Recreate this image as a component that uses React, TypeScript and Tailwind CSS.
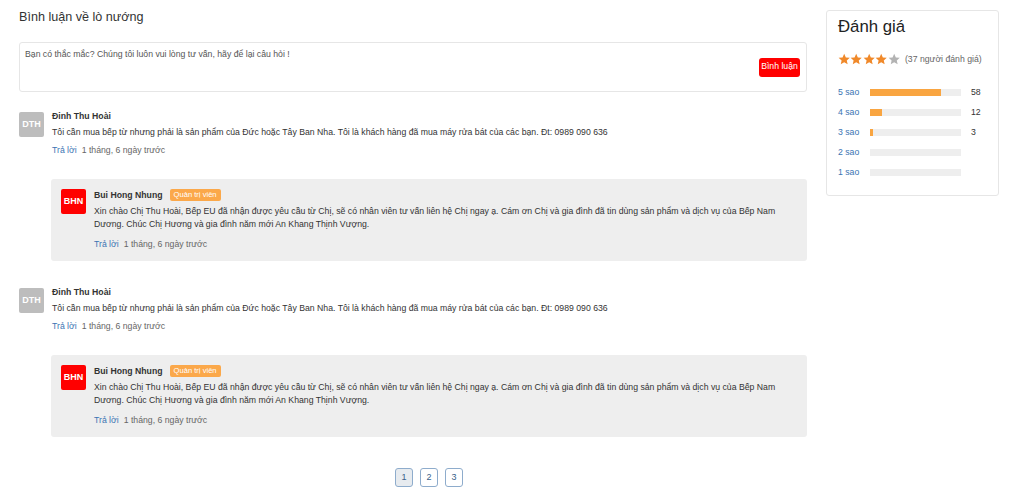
import React from 'react'

const font = { fontFamily: '"Liberation Sans", Arial, sans-serif' }

// ── Data ──────────────────────────────────────────────────────────────────────
const comments = [1, 2].map((id) => ({
  id,
  initials: 'DTH',
  name: 'Đinh Thu Hoài',
  text: 'Tôi cần mua bếp từ nhưng phải là sản phẩm của Đức hoặc Tây Ban Nha. Tôi là khách hàng đã mua máy rửa bát của các bạn. Đt: 0989 090 636',
  time: '1 tháng, 6 ngày trước',
  reply: {
    initials: 'BHN',
    name: 'Bui Hong Nhung',
    text: 'Xin chào Chị Thu Hoài, Bếp EU đã nhận được yêu cầu từ Chị, sẽ có nhân viên tư vấn liên hệ Chị ngay ạ. Cám ơn Chị và gia đình đã tin dùng sản phẩm và dịch vụ của Bếp Nam Dương. Chúc Chị Hương và gia đình năm mới An Khang Thịnh Vượng.',
    time: '1 tháng, 6 ngày trước',
  },
}))

const ratings = [
  { label: '5 sao', pct: 78, count: '58' },
  { label: '4 sao', pct: 13, count: '12' },
  { label: '3 sao', pct: 3, count: '3' },
  { label: '2 sao', pct: 0, count: '' },
  { label: '1 sao', pct: 0, count: '' },
]

function Star({ filled }: { filled: boolean }) {
  return (
    <svg viewBox="0 0 24 24" className="h-[12.4px] w-[12.4px]" fill={filled ? '#f0892a' : '#b3b3b3'}>
      <path d="M12 1.5l3.2 7.1 7.6.7-5.8 5.1 1.7 7.6L12 18.1 5.3 22l1.7-7.6L1.2 9.3l7.6-.7z" />
    </svg>
  )
}

function Meta({ time }: { time: string }) {
  return (
    <div className="flex h-[12px] items-center gap-[5px] text-[8.7px] leading-[12px]">
      <span className="text-[#3a74b3]">Trả lời</span>
      <span className="text-[#666]">{time}</span>
    </div>
  )
}

// ── Comment block ─────────────────────────────────────────────────────────────
function Comment({ c, first }: { c: (typeof comments)[number]; first: boolean }) {
  return (
    <div className={first ? 'mt-[18px]' : 'mt-[25px]'}>
      <div className="flex gap-[8px]">
        <div className="mt-[2px] flex h-[25px] w-[25px] shrink-0 items-center justify-center rounded-[2px] bg-[#bdbdbd] text-[9px] font-bold text-white">
          {c.initials}
        </div>
        <div className="flex-1">
          <div className="h-[12px] text-[8.7px] font-bold leading-[12px] text-[#333]">{c.name}</div>
          <div className="mt-[4px] text-[8.7px] leading-[12px] text-[#333]">{c.text}</div>
          <div className="mt-[6px]">
            <Meta time={c.time} />
          </div>
        </div>
      </div>

      {/* Admin reply */}
      <div className="ml-[32px] mt-[23px] flex gap-[8px] rounded-[3px] bg-[#eeeeee] pb-[11px] pl-[10px] pr-[16px] pt-[10px]">
        <div className="flex h-[25px] w-[25px] shrink-0 items-center justify-center rounded-[2px] bg-[#ff0000] text-[9px] font-bold text-white">
          {c.reply.initials}
        </div>
        <div className="flex-1">
          <div className="flex h-[12px] items-center gap-[7px]">
            <span className="text-[8.7px] font-bold leading-[12px] text-[#333]">{c.reply.name}</span>
            <span className="rounded-[2px] bg-[#fba84a] px-[4px] text-[7.6px] leading-[12px] text-white">
              Quản trị viên
            </span>
          </div>
          <div className="mt-[4px] text-[8.7px] leading-[13px] text-[#333]">{c.reply.text}</div>
          <div className="mt-[7px]">
            <Meta time={c.reply.time} />
          </div>
        </div>
      </div>
    </div>
  )
}

// ── Page ──────────────────────────────────────────────────────────────────────
export default function App() {
  return (
    <div className="flex h-[503px] w-[1019px] gap-[19px] bg-white pl-[19px] pr-[20px]" style={font}>
      <div className="flex-1">
        <h2 className="mt-[9px] text-[12.6px] leading-[16px] text-[#333]">Bình luận về lò nướng</h2>

        {/* Question box */}
        <div className="mt-[17px] flex h-[50px] items-center rounded-[3px] border border-[#e6e6e6] pl-[5px] pr-[6px]">
          <div className="flex-1 self-start pt-[5px] text-[8.7px] leading-[12px] text-[#555]">
            Bạn có thắc mắc? Chúng tôi luôn vui lòng tư vấn, hãy để lại câu hỏi !
          </div>
          <button className="h-[19px] w-[41px] rounded-[3px] bg-[#ff0000] text-[8.7px] text-white">Bình luận</button>
        </div>

        {comments.map((c, i) => (
          <Comment key={c.id} c={c} first={i === 0} />
        ))}

        {/* Pagination */}
        <div className="mt-[31px] flex gap-[7px] pl-[376px]">
          {['1', '2', '3'].map((p, i) => (
            <div
              key={p}
              className={`flex h-[19px] w-[18px] items-center justify-center rounded-[3px] border border-[#8eaccc] text-[9px] text-[#3a5f8a] ${
                i === 0 ? 'bg-[#e7ebef]' : 'bg-white'
              }`}
            >
              {p}
            </div>
          ))}
        </div>
      </div>

      {/* Rating panel */}
      <div className="mt-[10px] h-[186px] w-[173px] shrink-0 rounded-[3px] border border-[#e6e6e6] px-[11px]">
        <div className="mt-[5px] text-[16.8px] leading-[22px] text-[#222]">Đánh giá</div>
        <div className="mt-[15px] flex items-center">
          {[0, 1, 2, 3, 4].map((i) => (
            <Star key={i} filled={i < 4} />
          ))}
          <span className="ml-[5px] text-[8.7px] text-[#666]">(37 người đánh giá)</span>
        </div>
        <div className="mt-[20px] flex flex-col gap-[8px]">
          {ratings.map((r) => (
            <div key={r.label} className="flex h-[12px] items-center">
              <span className="w-[32px] text-[8.7px] leading-[12px] text-[#3a74b3]">{r.label}</span>
              <div className="h-[7px] w-[91px] bg-[#eeeeee]">
                <div className="h-full bg-[#f9a541]" style={{ width: `${r.pct}%` }} />
              </div>
              <span className="ml-[10px] text-[8.7px] text-[#333]">{r.count}</span>
            </div>
          ))}
        </div>
      </div>
    </div>
  )
}
